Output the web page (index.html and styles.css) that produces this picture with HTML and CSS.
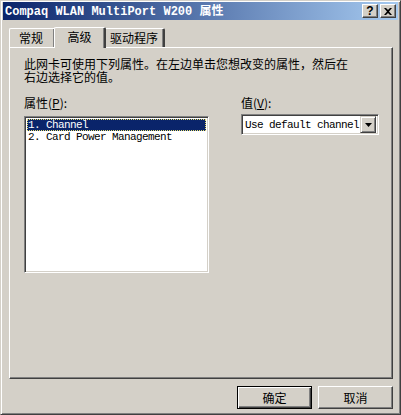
FILE: index.html
```html
<!DOCTYPE html>
<html>
<head>
<meta charset="utf-8">
<link rel="stylesheet" href="styles.css">
</head>
<body>
<div class="window">
  <div class="titlebar">
    <span class="title">Compaq WLAN MultiPort W200 <span class="cjk">属性</span></span>
    <div class="tbtns">
      <div class="tbtn"><span class="q">?</span></div>
      <div class="tbtn"><svg width="8" height="7" viewBox="0 0 8 7"><path d="M0 0h2l2 2 2-2h2L5 3.5 8 7H6L4 5 2 7H0l3-3.5z" fill="#000"/></svg></div>
    </div>
  </div>
  <div class="tabs">
    <div class="tab first">常规</div>
    <div class="tab active">高级</div>
    <div class="tab last">驱动程序</div>
  </div>
  <div class="panel">
    <div class="desc">此网卡可使用下列属性。在左边单击您想改变的属性，然后在</div>
    <div class="desc">右边选择它的值。</div>
    <div class="cols">
      <div class="colL">
        <div class="label">属性(<u>P</u>):</div>
        <div class="listbox">
          <div class="item sel">1. Channel</div>
          <div class="item">2. Card Power Management</div>
        </div>
      </div>
      <div class="colR">
        <div class="label">值(<u>V</u>):</div>
        <div class="combo">
          <span class="ctext">Use default channel</span>
          <div class="cbtn"><svg width="7" height="4" viewBox="0 0 7 4"><path d="M0 0h7L3.5 4z" fill="#000"/></svg></div>
        </div>
      </div>
    </div>
  </div>
  <div class="buttons">
    <div class="btn def">确定</div>
    <div class="btn">取消</div>
  </div>
</div>
</body>
</html>
```
FILE: styles.css
```css
* { box-sizing: border-box; }
html, body { margin: 0; padding: 0; background: #D4D0C8; }
body { font-family: "Noto Sans CJK SC", "DejaVu Sans", sans-serif; font-size: 12px; color: #000; }
.window {
  width: 401px; height: 415px;
  background: #D4D0C8;
  border: 1px solid; border-color: #D4D0C8 #404040 #404040 #D4D0C8;
  box-shadow: inset 1px 1px #fff, inset -1px -1px #808080;
  padding: 1px 2px 2px 2px;
  display: flex; flex-direction: column;
}
.titlebar {
  height: 18px;
  background: linear-gradient(to right, #0A246A, #A6CAF0);
  display: flex; align-items: center; justify-content: space-between;
  padding: 0 2px 0 2px;
}
.title {
  color: #fff; font-family: "Liberation Mono", monospace; font-weight: bold; font-size: 12px;
  line-height: 14px; white-space: nowrap;
}
.title .cjk { font-family: "Noto Sans CJK SC", sans-serif; font-size: 12px; }
.tbtns { display: flex; gap: 2px; }
.tbtn {
  width: 16px; height: 14px; background: #D4D0C8;
  border: 1px solid; border-color: #fff #404040 #404040 #fff;
  box-shadow: inset -1px -1px #808080;
  display: flex; align-items: center; justify-content: center;
}
.q { font-family: "Liberation Sans", sans-serif; font-weight: bold; font-size: 12px; line-height: 12px; }
.tabs { display: flex; padding-left: 6px; margin-top: 8px; height: 19px; align-items: flex-end; position: relative; z-index: 1; }
.tab {
  height: 19px; flex-shrink: 0; white-space: nowrap;
  border-top: 1px solid #fff; border-left: 1px solid #fff; border-right: 2px solid #404040;
  box-shadow: inset -1px 0 #808080;
  border-radius: 2px 2px 0 0;
  display: flex; align-items: center; justify-content: center; line-height: 14px;
}
.tab.first { width: 47px; padding-right: 2px; }
.tab.active {
  height: 21px; margin: 0 -2px -1px -2px; width: 52px; padding-bottom: 2px;
  background: #D4D0C8; position: relative; z-index: 2;
}
.tab.last { width: 61px; }
.panel {
  margin: 0 5px 0 6px; height: 332px;
  border: 1px solid; border-color: #fff #404040 #404040 #fff;
  box-shadow: inset -1px -1px #808080;
  padding: 9px 12px 0 14px;
}
.desc { margin: 0; height: 13px; line-height: 13px; font-size: 12px; white-space: nowrap; }
.cols { display: flex; margin-top: 14px; }
.colL { width: 185px; }
.colR { margin-left: 32px; }
.label { line-height: 12px; height: 12px; margin-bottom: 7px; }
.label u { text-decoration-thickness: 1px; }
.listbox {
  width: 185px; height: 157px; background: #fff;
  border: 1px solid; border-color: #808080 #fff #fff #808080;
  box-shadow: inset 1px 1px #404040, inset -1px -1px #D4D0C8;
  padding: 2px;
  font-family: "Liberation Mono", monospace; font-size: 11px; letter-spacing: -0.6px;
}
.item { height: 12px; line-height: 12px; padding-left: 1px; white-space: pre; }
.item.sel { background: #0A246A; color: #fff; outline: 1px dotted #E8E070; outline-offset: -1px; }
.combo {
  margin-left: 0; margin-top: -2px;
  width: 138px; height: 21px; background: #fff;
  border: 1px solid; border-color: #808080 #fff #fff #808080;
  box-shadow: inset 1px 1px #404040, inset -1px -1px #D4D0C8;
  display: flex; align-items: center; justify-content: space-between;
  padding: 2px;
  font-family: "Liberation Mono", monospace; font-size: 11px; letter-spacing: -0.6px;
}
.ctext { padding-left: 1px; white-space: pre; }
.cbtn {
  width: 16px; height: 17px; background: #D4D0C8; flex-shrink: 0;
  border: 1px solid; border-color: #D4D0C8 #404040 #404040 #D4D0C8;
  box-shadow: inset 1px 1px #fff, inset -1px -1px #808080;
  display: flex; align-items: center; justify-content: center;
}
.buttons { display: flex; justify-content: flex-end; gap: 6px; padding-right: 5px; margin-top: 7px; }
.btn {
  width: 75px; height: 23px;
  border: 1px solid; border-color: #fff #404040 #404040 #fff;
  box-shadow: inset -1px -1px #808080;
  display: flex; align-items: center; justify-content: center; line-height: 14px;
}
.btn.def { border: 1px solid #000; box-shadow: inset 1px 1px #fff, inset -1px -1px #404040, inset -2px -2px #808080; }
```
